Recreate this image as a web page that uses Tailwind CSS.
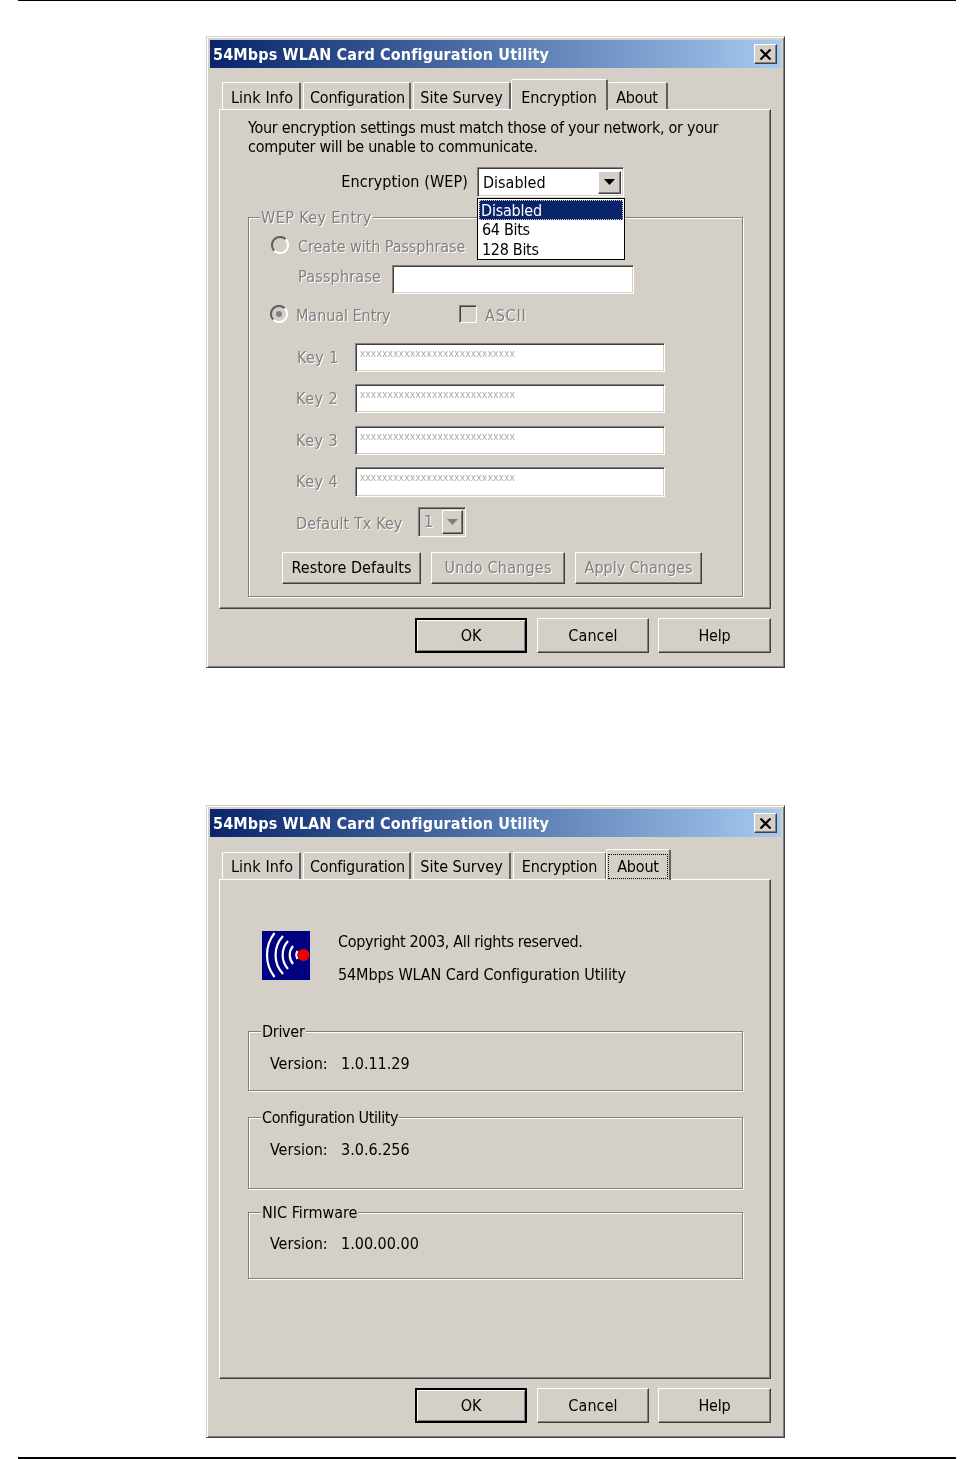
<!DOCTYPE html>
<html><head><meta charset="utf-8"><script src="https://cdn.jsdelivr.net/npm/@tailwindcss/browser@4"></script></head>
<body class="bg-white">
<div class="w-[974px] h-[1459px] overflow-hidden font-['DejaVu_Sans_Condensed','Liberation_Sans',sans-serif] text-[16px] tracking-[-0.2px] leading-[22px] text-black">
<div class="ml-[18px] w-[938px] h-px bg-black"></div>

<!-- dialog 1 -->
<div class="blur-[0.4px] mt-[35px] ml-[206px] w-[579px] h-[632px] p-[3px] bg-[#d4d0c8] border border-t-[#d4d0c8] border-l-[#d4d0c8] border-r-[#404040] border-b-[#404040] shadow-[inset_1px_1px_0_#fff,inset_-1px_-1px_0_#808080]">
  <div class="flex items-center justify-between h-[28px] bg-gradient-to-r from-[#0a246a] to-[#a6caf0]">
    <span class="pl-[3px] pt-[1px] font-bold text-[16px] tracking-[0.15px] text-white whitespace-nowrap">54Mbps WLAN Card Configuration Utility</span>
    <div class="mr-[4px] w-[23px] h-[20px] flex items-center justify-center bg-[#d4d0c8] border border-t-white border-l-white border-r-[#404040] border-b-[#404040] shadow-[inset_-1px_-1px_0_#808080]"><svg width="13" height="11" viewBox="0 0 13 11"><path d="M1.5 0.5L11.5 10.5M11.5 0.5L1.5 10.5" stroke="#000" stroke-width="2.2" fill="none"/></svg></div>
  </div>
  <div class="mt-[11px] ml-[12px] h-[30px] flex items-end relative z-10">
    <div class="w-[79px] h-[27px] pt-[3px] pl-[2px] tracking-[0.1px] flex items-center justify-center border-t border-l border-t-white border-l-white border-r-2 border-r-[#606060] rounded-t-[2px]">Link Info</div>
    <div class="ml-[2px] w-[108px] h-[27px] pt-[3px] pl-[2px] flex items-center justify-center border-t border-l border-t-white border-l-white border-r-2 border-r-[#606060] rounded-t-[2px]">Configuration</div>
    <div class="ml-[2px] w-[98px] h-[27px] pt-[3px] tracking-[0px] flex items-center justify-center border-t border-l border-t-white border-l-white border-r-2 border-r-[#606060] rounded-t-[2px]">Site Survey</div>
    <div class="-mb-px w-[97px] h-[31px] pt-[6px] flex items-center justify-center bg-[#d4d0c8] border-t border-l border-t-white border-l-white border-r-2 border-r-[#606060] rounded-t-[2px]">Encryption</div>
    <div class="w-[60px] h-[27px] pt-[3px] flex items-center justify-center border-t border-r-2 border-t-white border-r-[#606060] rounded-t-[2px]">About</div>
  </div>
  <div class="ml-[9px] w-[552px] h-[500px] border border-t-white border-l-white border-r-[#404040] border-b-[#404040] shadow-[inset_-1px_-1px_0_#808080]">
    <p class="ml-[28px] pt-[8px] whitespace-nowrap leading-[19px] tracking-[-0.28px]">Your encryption settings must match those of your network, or your<br>computer will be unable to communicate.</p>
    <div class="mt-[11px] h-[30px] flex items-center">
      <div class="w-[248px] text-right tracking-[0.1px]">Encryption (WEP)</div>
      <div class="relative ml-[9px] w-[147px] h-[30px] flex items-center justify-between pl-[5px] pr-[2px] bg-white border border-t-[#808080] border-l-[#808080] border-r-white border-b-white shadow-[inset_1px_1px_0_#404040,inset_-1px_-1px_0_#d4d0c8]">
        <span class="tracking-[0px] pt-[2px]">Disabled</span>
        <div class="w-[23px] h-[23px] flex items-center justify-center bg-[#d4d0c8] border border-t-white border-l-white border-r-[#404040] border-b-[#404040] shadow-[inset_-1px_-1px_0_#808080]"><svg width="11" height="6" viewBox="0 0 11 6"><polygon points="0,0 11,0 5.5,6" fill="#000"/></svg></div>
        <div class="absolute z-20 left-[-1px] top-[30px] w-[148px] h-[62px] bg-white border border-black p-px leading-[19px]">
          <div class="h-[20px] pl-[1px] bg-[#0a246a] text-white border border-dotted border-[#d4d0c8]">Disabled</div>
          <div class="pl-[3px] tracking-[-0.3px]">64 Bits</div>
          <div class="pl-[3px] mt-px tracking-[-0.3px]">128 Bits</div>
        </div>
      </div>
    </div>
    <div class="relative mt-[20px] ml-[28px] w-[495px] h-[380px] border border-[#808080] shadow-[inset_1px_1px_0_#fff,1px_1px_0_#fff] text-[#808080] [text-shadow:1px_1px_0_#fff]">
      <div class="absolute -top-[11px] left-[11px] px-[1px] bg-[#d4d0c8] tracking-[0.4px]">WEP Key Entry</div>
      <div class="mt-[18px] h-[18px] pl-[22px] flex items-center gap-[9px]">
        <svg width="18" height="18" viewBox="0 0 18 18"><circle cx="9" cy="9" r="8" fill="#d4d0c8"/><path d="M3.3 14.7A8 8 0 0 1 14.7 3.3" stroke="#606060" stroke-width="2" fill="none"/><path d="M14.7 3.3A8 8 0 0 1 3.3 14.7" stroke="#fff" stroke-width="2" fill="none"/></svg>
        <span class="pt-[4px] tracking-[-0.06px]">Create with Passphrase</span>
      </div>
      <div class="mt-[11px] h-[29px] pl-[49px] flex items-center">
        <div class="w-[94px] pb-[6px] tracking-[0.2px]">Passphrase</div>
        <div class="w-[242px] h-[29px] bg-white border border-t-[#808080] border-l-[#808080] border-r-white border-b-white shadow-[inset_1px_1px_0_#404040,inset_-1px_-1px_0_#d4d0c8]"></div>
      </div>
      <div class="mt-[11px] h-[18px] pl-[21px] flex items-center">
        <svg width="18" height="18" viewBox="0 0 18 18"><circle cx="9" cy="9" r="8" fill="#d4d0c8"/><path d="M3.3 14.7A8 8 0 0 1 14.7 3.3" stroke="#606060" stroke-width="2" fill="none"/><path d="M14.7 3.3A8 8 0 0 1 3.3 14.7" stroke="#fff" stroke-width="2" fill="none"/><circle cx="9" cy="9" r="3" fill="#808080"/></svg>
        <div class="ml-[8px] w-[163px] pt-[4px] tracking-[-0.05px]">Manual Entry</div>
        <div class="w-[18px] h-[18px] border border-t-[#808080] border-l-[#808080] border-r-white border-b-white shadow-[inset_1px_1px_0_#404040]"></div>
        <div class="ml-[8px] pt-[4px] tracking-[0.8px]">ASCII</div>
      </div>
      <div class="mt-[20px] h-[29px] pl-[48px] flex items-center">
        <div class="w-[58px] tracking-[0.4px]">Key 1</div>
        <div class="w-[310px] h-[29px] pl-[4px] bg-white border border-t-[#808080] border-l-[#808080] border-r-white border-b-white shadow-[inset_1px_1px_0_#404040,inset_-1px_-1px_0_#d4d0c8] text-[10px] leading-[19px] tracking-[0.55px] text-[#a8a8a8] [text-shadow:none] font-['Liberation_Sans',sans-serif]">xxxxxxxxxxxxxxxxxxxxxxxxxxxx</div>
      </div>
      <div class="mt-[12px] h-[29px] pl-[47px] flex items-center">
        <div class="w-[59px] tracking-[0.5px]">Key 2</div>
        <div class="w-[310px] h-[29px] pl-[4px] bg-white border border-t-[#808080] border-l-[#808080] border-r-white border-b-white shadow-[inset_1px_1px_0_#404040,inset_-1px_-1px_0_#d4d0c8] text-[10px] leading-[19px] tracking-[0.55px] text-[#a8a8a8] [text-shadow:none] font-['Liberation_Sans',sans-serif]">xxxxxxxxxxxxxxxxxxxxxxxxxxxx</div>
      </div>
      <div class="mt-[13px] h-[29px] pl-[47px] flex items-center">
        <div class="w-[59px] tracking-[0.5px]">Key 3</div>
        <div class="w-[310px] h-[29px] pl-[4px] bg-white border border-t-[#808080] border-l-[#808080] border-r-white border-b-white shadow-[inset_1px_1px_0_#404040,inset_-1px_-1px_0_#d4d0c8] text-[10px] leading-[19px] tracking-[0.55px] text-[#a8a8a8] [text-shadow:none] font-['Liberation_Sans',sans-serif]">xxxxxxxxxxxxxxxxxxxxxxxxxxxx</div>
      </div>
      <div class="mt-[12px] h-[30px] pl-[47px] flex items-center">
        <div class="w-[59px] tracking-[0.5px]">Key 4</div>
        <div class="w-[310px] h-[30px] pl-[4px] bg-white border border-t-[#808080] border-l-[#808080] border-r-white border-b-white shadow-[inset_1px_1px_0_#404040,inset_-1px_-1px_0_#d4d0c8] text-[10px] leading-[19px] tracking-[0.55px] text-[#a8a8a8] [text-shadow:none] font-['Liberation_Sans',sans-serif]">xxxxxxxxxxxxxxxxxxxxxxxxxxxx</div>
      </div>
      <div class="mt-[10px] h-[30px] pl-[47px] flex items-center">
        <div class="w-[122px] pt-[4px] tracking-[0.1px]">Default Tx Key</div>
        <div class="w-[48px] h-[30px] flex items-center justify-between pl-[5px] pr-[2px] border border-t-[#808080] border-l-[#808080] border-r-white border-b-white shadow-[inset_1px_1px_0_#404040,inset_-1px_-1px_0_#d4d0c8]">
          <span>1</span>
          <div class="w-[21px] h-[24px] flex items-center justify-center border border-t-white border-l-white border-r-[#404040] border-b-[#404040] shadow-[inset_-1px_-1px_0_#808080]"><svg width="11" height="6" viewBox="0 0 11 6"><polygon points="0,0 11,0 5.5,6" fill="#808080"/></svg></div>
        </div>
      </div>
      <div class="mt-[15px] pl-[33px] flex gap-[10px]">
        <div class="w-[139px] h-[32px] flex items-center justify-center tracking-[0.05px] text-black [text-shadow:none] border border-t-white border-l-white border-r-[#404040] border-b-[#404040] shadow-[inset_-1px_-1px_0_#808080]">Restore Defaults</div>
        <div class="w-[134px] h-[32px] flex items-center justify-center tracking-[0.2px] border border-t-white border-l-white border-r-[#404040] border-b-[#404040] shadow-[inset_-1px_-1px_0_#808080]">Undo Changes</div>
        <div class="w-[127px] h-[32px] flex items-center justify-center tracking-[0px] border border-t-white border-l-white border-r-[#404040] border-b-[#404040] shadow-[inset_-1px_-1px_0_#808080]">Apply Changes</div>
      </div>
    </div>
  </div>
  <div class="mt-[9px] ml-[205px] flex">
    <div class="w-[112px] h-[35px] flex items-center justify-center border-2 border-black shadow-[inset_1px_1px_0_#fff,inset_-1px_-1px_0_#808080]">OK</div>
    <div class="ml-[10px] w-[112px] h-[35px] flex items-center justify-center tracking-[0.1px] border border-t-white border-l-white border-r-[#404040] border-b-[#404040] shadow-[inset_-1px_-1px_0_#808080]">Cancel</div>
    <div class="ml-[9px] w-[113px] h-[35px] flex items-center justify-center border border-t-white border-l-white border-r-[#404040] border-b-[#404040] shadow-[inset_-1px_-1px_0_#808080]">Help</div>
  </div>
</div>

<!-- dialog 2 -->
<div class="blur-[0.4px] mt-[137px] ml-[206px] w-[579px] h-[633px] p-[3px] bg-[#d4d0c8] border border-t-[#d4d0c8] border-l-[#d4d0c8] border-r-[#404040] border-b-[#404040] shadow-[inset_1px_1px_0_#fff,inset_-1px_-1px_0_#808080]">
  <div class="flex items-center justify-between h-[28px] bg-gradient-to-r from-[#0a246a] to-[#a6caf0]">
    <span class="pl-[3px] pt-[1px] font-bold text-[16px] tracking-[0.15px] text-white whitespace-nowrap">54Mbps WLAN Card Configuration Utility</span>
    <div class="mr-[4px] w-[23px] h-[20px] flex items-center justify-center bg-[#d4d0c8] border border-t-white border-l-white border-r-[#404040] border-b-[#404040] shadow-[inset_-1px_-1px_0_#808080]"><svg width="13" height="11" viewBox="0 0 13 11"><path d="M1.5 0.5L11.5 10.5M11.5 0.5L1.5 10.5" stroke="#000" stroke-width="2.2" fill="none"/></svg></div>
  </div>
  <div class="mt-[12px] ml-[12px] h-[30px] flex items-end relative z-10">
    <div class="w-[79px] h-[27px] pt-[2px] pl-[2px] tracking-[0.1px] flex items-center justify-center border-t border-l border-t-white border-l-white border-r-2 border-r-[#606060] rounded-t-[2px]">Link Info</div>
    <div class="ml-[2px] w-[108px] h-[27px] pt-[2px] pl-[2px] flex items-center justify-center border-t border-l border-t-white border-l-white border-r-2 border-r-[#606060] rounded-t-[2px]">Configuration</div>
    <div class="ml-[2px] w-[98px] h-[27px] pt-[2px] tracking-[0px] flex items-center justify-center border-t border-l border-t-white border-l-white border-r-2 border-r-[#606060] rounded-t-[2px]">Site Survey</div>
    <div class="ml-[2px] w-[94px] h-[27px] pt-[2px] flex items-center justify-center border-t border-l border-t-white border-l-white border-r-2 border-r-[#606060] rounded-t-[2px]">Encryption</div>
    <div class="-ml-px -mb-px w-[65px] h-[31px] pt-[3px] flex items-center justify-center bg-[#d4d0c8] border-t border-l border-t-white border-l-white border-r-2 border-r-[#606060] rounded-t-[2px]"><span class="w-[60px] h-[25px] text-center border border-dotted border-black leading-[23px]">About</span></div>
  </div>
  <div class="ml-[9px] w-[552px] h-[500px] pt-[51px] border border-t-white border-l-white border-r-[#404040] border-b-[#404040] shadow-[inset_-1px_-1px_0_#808080]">
    <div class="ml-[42px] h-[49px] flex">
      <svg width="48" height="49" viewBox="0 0 48 49"><rect width="48" height="49" fill="#000080"/><g stroke="#fff" stroke-width="2.2" fill="none"><path d="M12.5 2A36 36 0 0 0 12.5 46"/><path d="M21 5A28 28 0 0 0 21 43"/><path d="M26 10A21 21 0 0 0 26 38"/><path d="M31 15A14 14 0 0 0 31 33"/><path d="M35.5 20A8 8 0 0 0 35.5 28"/></g><circle cx="41.5" cy="24" r="6" fill="#f00000"/></svg>
      <div class="ml-[28px] whitespace-nowrap">
        <div class="tracking-[-0.34px]">Copyright 2003, All rights reserved.</div>
        <div class="mt-[11px] tracking-[-0.1px]">54Mbps WLAN Card Configuration Utility</div>
      </div>
    </div>
    <div class="relative mt-[51px] ml-[28px] w-[495px] h-[60px] pt-[21px] pl-[21px] flex tracking-[0px] border border-[#808080] shadow-[inset_1px_1px_0_#fff,1px_1px_0_#fff]">
      <div class="absolute -top-[11px] left-[12px] px-[1px] bg-[#d4d0c8] tracking-[-0.3px]">Driver</div>
      <div class="w-[71px]">Version:</div><div>1.0.11.29</div>
    </div>
    <div class="relative mt-[26px] ml-[28px] w-[495px] h-[72px] pt-[21px] pl-[21px] flex tracking-[0px] border border-[#808080] shadow-[inset_1px_1px_0_#fff,1px_1px_0_#fff]">
      <div class="absolute -top-[11px] left-[12px] px-[1px] bg-[#d4d0c8] tracking-[-0.4px]">Configuration Utility</div>
      <div class="w-[71px]">Version:</div><div>3.0.6.256</div>
    </div>
    <div class="relative mt-[23px] ml-[28px] w-[495px] h-[67px] pt-[20px] pl-[21px] flex tracking-[0px] border border-[#808080] shadow-[inset_1px_1px_0_#fff,1px_1px_0_#fff]">
      <div class="absolute -top-[11px] left-[12px] px-[1px] bg-[#d4d0c8]">NIC Firmware</div>
      <div class="w-[71px]">Version:</div><div>1.00.00.00</div>
    </div>
  </div>
  <div class="mt-[9px] ml-[205px] flex">
    <div class="w-[112px] h-[35px] flex items-center justify-center border-2 border-black shadow-[inset_1px_1px_0_#fff,inset_-1px_-1px_0_#808080]">OK</div>
    <div class="ml-[10px] w-[112px] h-[35px] flex items-center justify-center tracking-[0.1px] border border-t-white border-l-white border-r-[#404040] border-b-[#404040] shadow-[inset_-1px_-1px_0_#808080]">Cancel</div>
    <div class="ml-[9px] w-[113px] h-[35px] flex items-center justify-center border border-t-white border-l-white border-r-[#404040] border-b-[#404040] shadow-[inset_-1px_-1px_0_#808080]">Help</div>
  </div>
</div>
<div class="mt-[19px] ml-[18px] w-[938px] h-[2px] bg-black"></div>
</div>
</body></html>
